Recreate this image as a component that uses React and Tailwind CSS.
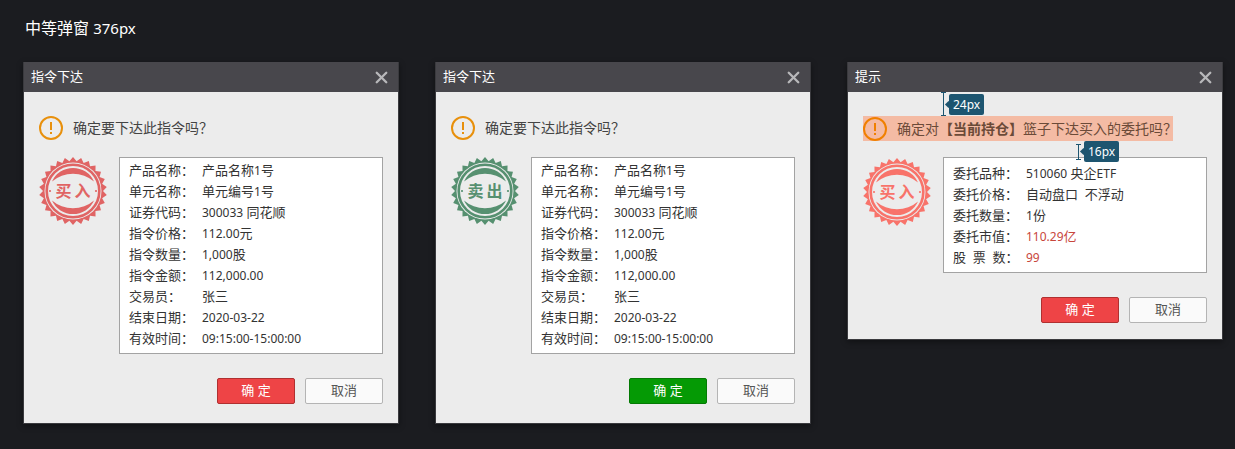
import React from 'react';
import { X } from 'lucide-react';

const orderRows = [
  ['产品名称：', '产品名称1号'],
  ['单元名称：', '单元编号1号'],
  ['证券代码：', '300033 同花顺'],
  ['指令价格：', '112.00元'],
  ['指令数量：', '1,000股'],
  ['指令金额：', '112,000.00'],
  ['交易员：', '张三'],
  ['结束日期：', '2020-03-22'],
  ['有效时间：', '09:15:00-15:00:00'],
];

const basketRows = [
  ['委托品种：', '510060 央企ETF'],
  ['委托价格：', '自动盘口  不浮动'],
  ['委托数量：', '1份'],
  ['委托市值：', '110.29亿', true],
  ['股  票  数：', '99', true],
];

// sawtooth edge of the stamp
const teeth = (count, outer, inner) => {
  const pts = [];
  for (let i = 0; i < count * 2; i++) {
    const r = i % 2 === 0 ? outer : inner;
    const a = (Math.PI * i) / count - Math.PI / 2;
    pts.push(`${(r * Math.cos(a)).toFixed(2)},${(r * Math.sin(a)).toFixed(2)}`);
  }
  return pts.join(' ');
};

// digits and latin run a size below the chinese glyphs in the design
const Mixed = ({ text, latinClass = 'text-xs' }) =>
  text.split(/([\x21-\x7e]+)/).map((part, i) =>
    /^[\x21-\x7e]+$/.test(part) ? <span key={i} className={latinClass}>{part}</span> : part
  );

const Stamp = ({ color, text }) => (
  <svg width="68" height="68" viewBox="-34 -34 68 68" className="shrink-0">
    <polygon points={teeth(26, 34, 30)} fill={color} />
    <circle r="28.5" fill="#ececec" />
    <circle r="26.3" fill="none" stroke={color} strokeWidth="2.6" />
    <path d="M-21 -9.5A23 23 0 0 1 21 -9.5A32 32 0 0 0 -21 -9.5Z" fill={color} />
    <path d="M-21 9.5A23 23 0 0 0 21 9.5A32 32 0 0 1 -21 9.5Z" fill={color} />
    <circle cx="-23" r="1.1" fill={color} />
    <circle cx="23" r="1.1" fill={color} />
    <text x="1.5" y="6" textAnchor="middle" fontSize="16" fontWeight="700" letterSpacing="3" fill={color} className="font-['Noto_Sans_CJK_SC',sans-serif]">
      {text}
    </text>
  </svg>
);

const WarnIcon = ({ color }) => (
  <svg width="24" height="24" viewBox="0 0 24 24" className="shrink-0">
    <circle cx="12" cy="12" r="11" fill="none" stroke={color} strokeWidth="2" />
    <rect x="11" y="6" width="2" height="8" fill={color} />
    <rect x="11" y="16" width="2" height="2" fill={color} />
  </svg>
);

const Measure = ({ label, height, className }) => (
  <div className={`absolute flex items-center ${className}`}>
    <div className="flex w-[5px] flex-col items-center" style={{ height }}>
      <div className="h-px w-[5px] bg-[#1d5570]" />
      <div className="w-px flex-1 bg-[#1d5570]" />
      <div className="h-px w-[5px] bg-[#1d5570]" />
    </div>
    <div className="relative ml-[3px] h-[21px] px-1 rounded-[2px] bg-[#1d5570] text-white text-xs leading-[21px]">
      <div className="absolute left-[-3px] top-[8px] w-[5px] h-[5px] rotate-45 bg-[#1d5570]" />
      <span className="relative">{label}</span>
    </div>
  </div>
);

const InfoBox = ({ rows, className }) => (
  <div className={`flex-1 bg-white border border-[#a3a3a3] px-[9px] ${className}`}>
    {rows.map(([label, value, red]) => (
      <div key={label} className="flex h-[21px] items-center text-[13px] text-[#333]">
        <span className="w-[73px] shrink-0 whitespace-pre">{label}</span>
        <span className={red ? 'whitespace-pre text-[#c8463c]' : 'whitespace-pre'}>
          <Mixed text={value} />
        </span>
      </div>
    ))}
  </div>
);

const Dialog = ({ title, children, okClass, bottomClass }) => (
  <div className="w-[376px] bg-[#ececec] border border-[#3a3a3e] border-t-0 shadow-[0_2px_6px_rgba(0,0,0,0.4)]">
    <div className="flex h-[30px] items-center justify-between bg-[#48474c] pl-[7px] pr-[7px] text-[13px] text-white">
      <span>{title}</span>
      <X size={19} strokeWidth={3} className="text-[#b8b8ba]" />
    </div>
    <div className={`relative px-[15px] pt-6 ${bottomClass}`}>
      {children}
      <div className="mt-6 flex justify-end gap-[10px]">
        <button className={`h-[26px] w-[78px] rounded-[2px] border text-[13px] text-white ${okClass}`}>确 定</button>
        <button className="h-[26px] w-[78px] rounded-[2px] border border-[#b4b4b4] bg-[#fafafa] text-[13px] text-[#555]">取消</button>
      </div>
    </div>
  </div>
);

const OrderDialog = ({ stampColor, stampText, okClass }) => (
  <Dialog title="指令下达" okClass={okClass} bottomClass="pb-[19px]">
    <div className="flex h-6 items-center gap-[10px] text-sm text-[#444]">
      <WarnIcon color="#e8900c" />
      <span>确定要下达此指令吗？</span>
    </div>
    <div className="mt-[17px] flex gap-3">
      <Stamp color={stampColor} text={stampText} />
      <InfoBox rows={orderRows} className="pt-[2px] pb-1" />
    </div>
  </Dialog>
);

export default function App() {
  return (
    <div className="h-[449px] w-[1235px] overflow-hidden bg-[#1b1c20] pl-[23px] font-['Noto_Sans','Noto_Sans_CJK_SC',sans-serif]">
      <div className="h-[62px] pl-[2px] pt-[17px] text-base leading-[22px] text-white">
        <Mixed text="中等弹窗 376px" latinClass="text-[15px]" />
      </div>
      <div className="flex items-start gap-9">
        <OrderDialog stampColor="#e06464" stampText="买入" okClass="bg-[#ee4446] border-[#b03030]" />
        <OrderDialog stampColor="#569070" stampText="卖出" okClass="bg-[#059a05] border-[#047a04]" />
        <Dialog title="提示" okClass="bg-[#ee4446] border-[#b03030]" bottomClass="pb-4">
          <Measure label="24px" height={24} className="left-[93px] top-0" />
          <div className="flex h-[25px] w-[310px] items-center gap-[10px] bg-[#f4bba4] text-sm text-[#6b4a38]">
            <WarnIcon color="#f08000" />
            <span className="whitespace-nowrap">确定对<b className="font-bold">【当前持仓】</b>篮子下达买入的委托吗？</span>
          </div>
          <Measure label="16px" height={16} className="left-[228px] top-[49px]" />
          <div className="mt-4 flex gap-3">
            <div className="pt-px">
              <Stamp color="#f8736a" text="买入" />
            </div>
            <InfoBox rows={basketRows} className="pt-[5px] pb-1" />
          </div>
        </Dialog>
      </div>
    </div>
  );
}
